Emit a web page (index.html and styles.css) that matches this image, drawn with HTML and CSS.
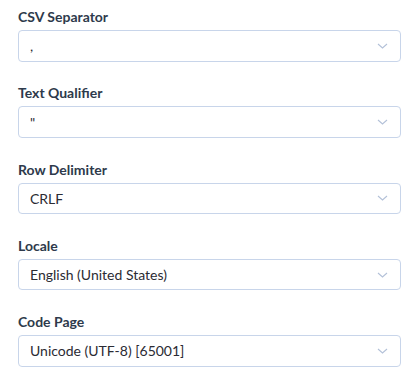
FILE: index.html
```html
<!DOCTYPE html>
<html>
<head>
<meta charset="utf-8">
<link rel="stylesheet" href="styles.css">
</head>
<body>
<div class="form">
  <div class="field">
    <label class="label">CSV Separator</label>
    <div class="select"><span class="value">,</span><svg class="chev" width="11" height="6" viewBox="0 0 11 6"><path d="M1 1l4.5 4L10 1" fill="none" stroke="#b3c1d8" stroke-width="1.1"/></svg></div>
  </div>
  <div class="field">
    <label class="label">Text Qualifier</label>
    <div class="select"><span class="value">"</span><svg class="chev" width="11" height="6" viewBox="0 0 11 6"><path d="M1 1l4.5 4L10 1" fill="none" stroke="#b3c1d8" stroke-width="1.1"/></svg></div>
  </div>
  <div class="field">
    <label class="label">Row Delimiter</label>
    <div class="select"><span class="value">CRLF</span><svg class="chev" width="11" height="6" viewBox="0 0 11 6"><path d="M1 1l4.5 4L10 1" fill="none" stroke="#b3c1d8" stroke-width="1.1"/></svg></div>
  </div>
  <div class="field">
    <label class="label">Locale</label>
    <div class="select"><span class="value">English (United States)</span><svg class="chev" width="11" height="6" viewBox="0 0 11 6"><path d="M1 1l4.5 4L10 1" fill="none" stroke="#b3c1d8" stroke-width="1.1"/></svg></div>
  </div>
  <div class="field">
    <label class="label">Code Page</label>
    <div class="select"><span class="value">Unicode (UTF-8) [65001]</span><svg class="chev" width="11" height="6" viewBox="0 0 11 6"><path d="M1 1l4.5 4L10 1" fill="none" stroke="#b3c1d8" stroke-width="1.1"/></svg></div>
  </div>
</div>
</body>
</html>
```
FILE: styles.css
```css
html, body {
  margin: 0;
  padding: 0;
  background: #fff;
}
body {
  font-family: Lato, "Open Sans", sans-serif;
}
.form {
  padding: 8px 17px 0 18px;
  display: flex;
  flex-direction: column;
  gap: 22.8px;
}
.field {
  display: flex;
  flex-direction: column;
  gap: 5px;
}
.label {
  font-size: 14px;
  font-weight: 700;
  line-height: 17px;
  color: #2e3a4b;
}
.select {
  box-sizing: border-box;
  height: 31.5px;
  border: 1px solid #c8d5ea;
  border-radius: 4px;
  display: flex;
  align-items: center;
  justify-content: space-between;
  padding: 0 12px 0 11px;
}
.value {
  font-size: 14px;
  color: #2b2b33;
}
.chev {
  display: block;
}
```
